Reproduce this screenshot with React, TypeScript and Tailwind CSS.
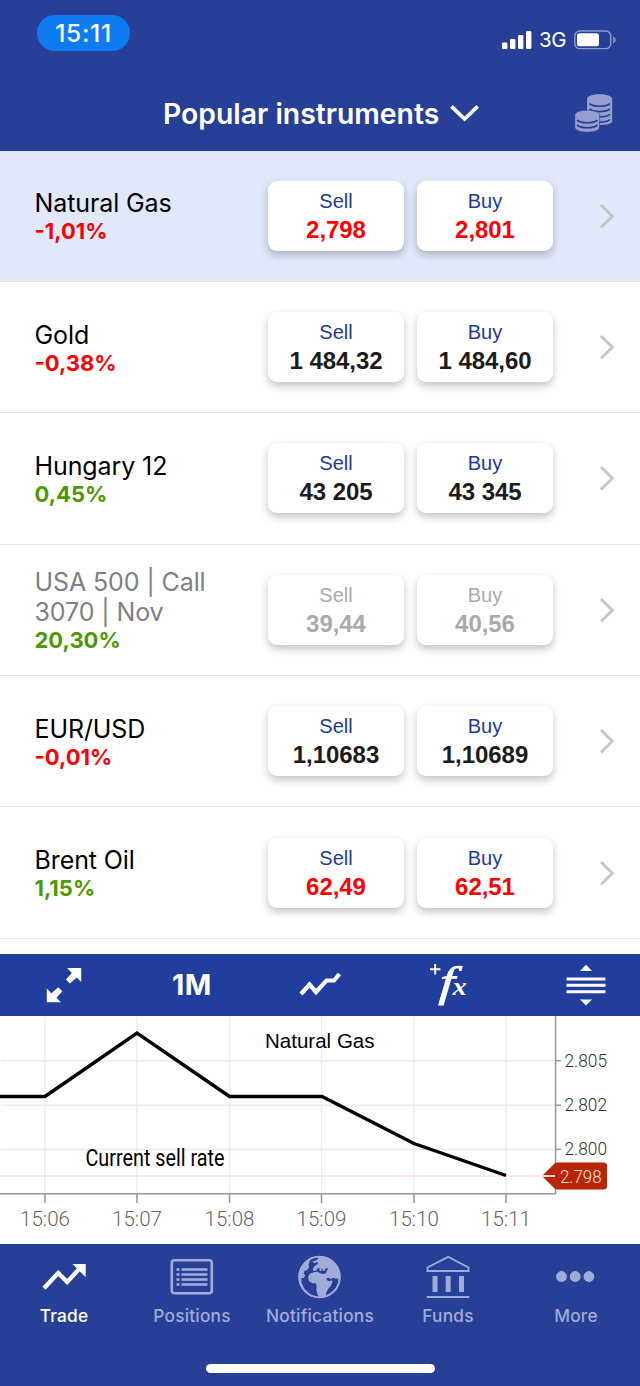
interface Instrument {
  name: string;
  change: string;
  sell: string;
  buy: string;
  priceColor: string;
  selected?: boolean;
  closed?: boolean;
}

const instruments: Instrument[] = [
  { name: 'Natural Gas', change: '-1,01%', sell: '2,798', buy: '2,801', priceColor: 'text-[#ff0000]', selected: true },
  { name: 'Gold', change: '-0,38%', sell: '1 484,32', buy: '1 484,60', priceColor: 'text-[#1c1c1c]' },
  { name: 'Hungary 12', change: '0,45%', sell: '43 205', buy: '43 345', priceColor: 'text-[#1c1c1c]' },
  { name: 'USA 500 | Call 3070 | Nov', change: '20,30%', sell: '39,44', buy: '40,56', priceColor: 'text-[#aaaaaa]', closed: true },
  { name: 'EUR/USD', change: '-0,01%', sell: '1,10683', buy: '1,10689', priceColor: 'text-[#1c1c1c]' },
  { name: 'Brent Oil', change: '1,15%', sell: '62,49', buy: '62,51', priceColor: 'text-[#ff0000]' },
];

const timeTicks = [
  { x: 45, label: '15:06' },
  { x: 137, label: '15:07' },
  { x: 229.5, label: '15:08' },
  { x: 321.5, label: '15:09' },
  { x: 414, label: '15:10' },
  { x: 506, label: '15:11' },
];

const rateTicks = [
  { y: 44.7, label: '2.805' },
  { y: 89.2, label: '2.802' },
  { y: 133.4, label: '2.800' },
];

function StatusBar() {
  return (
    <div className="flex h-[75px] justify-between pl-[37px] pr-[24px]">
      <div className="mt-[15px] flex h-9 w-[93px] items-center justify-center rounded-full bg-[#0e7bf1] text-[24.5px] font-medium tracking-[0.7px] text-white">
        15:11
      </div>
      <div className="mt-[28px] flex h-6 items-center text-white">
        <svg width="30" height="20" viewBox="0 0 30 20" fill="currentColor">
          <rect x="0" y="12.5" width="5.4" height="6.5" rx="1.3" />
          <rect x="8" y="9" width="5.4" height="10" rx="1.3" />
          <rect x="16" y="5" width="5.4" height="14" rx="1.3" />
          <rect x="24" y="1" width="5.4" height="18" rx="1.3" />
        </svg>
        <span className="ml-[7px] w-[29px] text-[20.5px] leading-6 tracking-[-0.5px]">3G</span>
        <svg className="ml-[6px]" width="42" height="20" viewBox="0 0 42 20">
          <rect x="0.8" y="1" width="36" height="17.6" rx="5" fill="none" stroke="#8f9bcc" strokeWidth="1.4" />
          <rect x="3" y="3.3" width="22" height="13" rx="2.5" fill="#fff" />
          <path d="M39.3 6.5c3 1.2 3 5.6 0 6.8z" fill="#8f9bcc" />
        </svg>
      </div>
    </div>
  );
}

function CoinsIcon() {
  return (
    <svg width="40" height="40" viewBox="0 0 40 40">
      <path d="M13 6v22c0 2.800 5.500 4 12.600 4s12.600-1.200 12.600-4V6c0-2.800-5.500-4.800-12.600-4.800S13 3.200 13 6z" fill="#959fcf" />
      <g fill="none" stroke="#273f96" strokeWidth="1.700" strokeLinecap="round">
        <path d="M16 11c4 3 15.500 3 19.500 0" />
        <path d="M16 16.300c4 3 15.500 3 19.500 0" />
        <path d="M16 21.600c4 3 15.500 3 19.500 0" />
        <path d="M16 26.900c4 3 15.500 3 19.500 0" />
      </g>
      <path d="M.8 22v12c0 3.200 5.500 5.200 12.400 5.200s12.400-2 12.400-5.200V22c0-3-5.500-4.700-12.400-4.700S.8 19 .8 22z" fill="#959fcf" stroke="#273f96" strokeWidth="0.600" />
      <g fill="none" stroke="#273f96" strokeWidth="1.700" strokeLinecap="round">
        <path d="M3.500 27.500c4 3 15.500 3 19.500 0" />
        <path d="M3.500 32.500c4 3 15.500 3 19.500 0" />
      </g>
    </svg>
  );
}

function Header() {
  return (
    <header className="h-[150.5px] shrink-0 bg-[#273f96]">
      <StatusBar />
      <div className="flex h-[75px] items-center pl-[163px] pr-[26px] text-white">
        <h1 className="w-[276px] whitespace-nowrap pt-[3px] text-[28.3px] font-semibold tracking-[0.02px]">Popular instruments</h1>
        <svg className="ml-[11px]" width="30" height="20" viewBox="0 0 30 20">
          <path d="M1.500 3.300l13.100 12.700L27.700 3.300" fill="none" stroke="#fff" strokeWidth="3.700" />
        </svg>
        <div className="ml-auto">
          <CoinsIcon />
        </div>
      </div>
    </header>
  );
}

function PriceButton({ label, price, item }: { label: string; price: string; item: Instrument }) {
  return (
    <button
      type="button"
      className="flex h-[70px] w-[136px] flex-col items-center rounded-[9px] bg-white pt-[8px] font-['Liberation_Sans',sans-serif] shadow-[0_4px_8px_rgba(0,0,0,0.24)]"
    >
      <span className={`text-[20px] leading-6 ${item.closed ? 'text-[#aaaaaa]' : 'text-[#1f3a97]'}`}>{label}</span>
      <span className={`mt-[3px] text-[24px] font-bold leading-7 tracking-[-0.05px] ${item.priceColor}`}>{price}</span>
    </button>
  );
}

function InstrumentRow({ item }: { item: Instrument }) {
  return (
    <div
      className={`flex h-[131.4px] shrink-0 items-center border-b border-[#e4e4e4] pl-[34.5px] pr-[24.5px] ${item.selected ? 'bg-[#e0e8f9]' : 'bg-white'}`}
    >
      <div className="w-[233.5px] pt-[2px]">
        <p className={`w-[190px] text-[25px] leading-[30px] tracking-[-0.1px] ${item.closed ? 'text-[#808080]' : 'text-black'}`}>
          {item.name}
        </p>
        <p className={`text-[22px] font-bold leading-[27px] ${item.change.startsWith('-') ? 'text-[#ff0000]' : 'text-[#4c9900]'}`}>
          {item.change}
        </p>
      </div>
      <div className="flex gap-[13px]">
        <PriceButton label="Sell" price={item.sell} item={item} />
        <PriceButton label="Buy" price={item.buy} item={item} />
      </div>
      <svg className="ml-auto" width="18" height="26" viewBox="0 0 18 26">
        <path d="M3 2l11.300 11.300L3 24.500" fill="none" stroke="#c7c7c7" strokeWidth="3" />
      </svg>
    </div>
  );
}

function ChartToolbar() {
  return (
    <div className="grid h-[62px] shrink-0 grid-cols-5 place-items-center bg-[#213d9d] text-white">
      <svg width="36" height="36" viewBox="0 0 36 36">
        <path d="M21 1h14.200v14l-4.500-4.400-6.800 6-4-4 6-6.600z" fill="#fff" />
        <path d="M.8 21.500v13.800h14.200l-4.500-4.600 5.800-6.500-4-4-7 6z" fill="#fff" />
      </svg>
      <span className="text-[28.5px] font-bold tracking-[0.7px]">1M</span>
      <svg width="44" height="30" viewBox="0 0 44 30">
        <path d="M3 24l8.500-9.500 6.500 7.500 10.500-11.500h7.500l5.500-6.500" fill="none" stroke="#fff" strokeWidth="4.200" />
      </svg>
      {/* add indicator */}
      <svg className="overflow-visible" width="44" height="48" viewBox="0 0 44 48" fill="#fff">
        <path d="M4 8.300h10.500M9.200 3v10.500" stroke="#fff" strokeWidth="1.900" />
        <g fontFamily="'Liberation Serif', serif" fontStyle="italic">
          <text transform="translate(12.800 35) skewX(-4) scale(1.280 1)" fontSize="42.500" stroke="#fff" strokeWidth="0.800">f</text>
          <text transform="translate(26.500 34) scale(1.100 1)" fontSize="26" fontWeight="700">x</text>
        </g>
      </svg>
      <svg className="relative left-[10px]" width="40" height="42" viewBox="0 0 40 42" fill="#fff">
        <path d="M14 7L20 .8 26 7zM14 35.500l6 6 6-6z" />
        <path d="M.5 13.500h39v3H.5zM.5 19.800h39v3H.5zM.5 26.200h39v3H.5z" />
      </svg>
    </div>
  );
}

function RateChart() {
  return (
    <svg className="block shrink-0 bg-white" width="640" height="228" viewBox="0 0 640 228" fontFamily="Roboto, sans-serif">
      {/* grid */}
      {timeTicks.map((t) => (
        <path key={t.label} d={`M${t.x} 1v176`} stroke="#ececec" strokeWidth="1.500" />
      ))}
      {rateTicks.map((r) => (
        <path key={r.label} d={`M1 ${r.y}h554`} stroke="#ececec" strokeWidth="1.500" />
      ))}
      <path d="M0 160h545" stroke="#f6dfea" strokeWidth="1.700" />

      {/* axes */}
      <path d="M0 177.700h556M555.600 0v178" stroke="#969696" strokeWidth="1.500" fill="none" />
      {timeTicks.map((t) => (
        <g key={t.label}>
          <path d={`M${t.x} 178v9`} stroke="#969696" strokeWidth="1.500" />
          <text x={t.x} y="209.500" textAnchor="middle" fontSize="20.500" fontWeight="300" fill="#666">{t.label}</text>
        </g>
      ))}
      {rateTicks.map((r) => (
        <g key={r.label}>
          <path d={`M556 ${r.y}h5`} stroke="#969696" strokeWidth="1.500" />
          <text x="564.500" y={r.y + 5.9} fontSize="18" fontWeight="300" fill="#333" textLength="42.500" lengthAdjust="spacingAndGlyphs">{r.label}</text>
        </g>
      ))}

      <path d="M0 80.500h45l92-63.500 92.500 63.500h92.500l92 47 92 32" fill="none" stroke="#000" strokeWidth="3.400" />

      {/* current rate flag */}
      <path d="M542 160l12-12c1.300-1.200 2-1.500 4-1.500h45.500a3.500 3.500 0 0 1 3.500 3.500v20a3.500 3.500 0 0 1-3.500 3.500H558c-2 0-2.700-.3-4-1.500z" fill="#b82507" />
      <path d="M542 160h13" stroke="#ffdcd6" strokeWidth="2" />
      <text x="560" y="166.500" fontSize="18" fontWeight="300" fill="#ffe5df" textLength="41.500" lengthAdjust="spacingAndGlyphs">2.798</text>

      <text x="265" y="32" fontFamily="'Liberation Sans', sans-serif" fontSize="20.500" textLength="109.500">Natural Gas</text>
      <text x="85.500" y="150" fontSize="23" textLength="139" lengthAdjust="spacingAndGlyphs">Current sell rate</text>
    </svg>
  );
}

function TradeIcon() {
  return (
    <svg width="44" height="44" viewBox="0 0 44 44">
      <path d="M2 33.300L16.200 18l9 9L38 13" fill="none" stroke="#fff" strokeWidth="4.300" />
      <path d="M30.500 9h13.200v13.200z" fill="#fff" />
    </svg>
  );
}

function PositionsIcon() {
  return (
    <svg width="44" height="44" viewBox="0 0 44 44" fill="#a1abd8">
      <rect x="1.800" y="5.300" width="40" height="33" rx="2.500" fill="none" stroke="#a1abd8" strokeWidth="2.600" />
      {[13.2, 18.2, 23.2, 28.2].map((y) => (
        <g key={y}>
          <rect x="6.500" y={y} width="3" height="2.600" />
          <rect x="11.500" y={y} width="26" height="2.600" />
        </g>
      ))}
    </svg>
  );
}

function GlobeIcon() {
  return (
    <svg width="44" height="44" viewBox="24 20 132 132">
      <circle cx="88.500" cy="86" r="63" fill="#a1abd8" />
      {/* atlantic */}
      <path
        d="M62 32l16-5 8 2-6 6-14 5 8 4 8-3 2 5-10 7-6 10 3 5 9-2 3 4-12 2-12 4-5 11 3 12 10 6 10 0 3 9-1 12 4 13 5 9-12-3-18-9-15-15-8-18-1-13 8-2 4-7-5-5 1-7 10-4 5-9-1-8z"
        fill="#273f96"
      />
      {/* mediterranean and black sea */}
      <path d="M80 63l5-4 4 1-1 5 5 4 3-2-3-7 4 2 4 7 4-3 1-5 6-2 2 4-4 4-1 6-6 4-8-1-7-3-7-4z" fill="#273f96" />
      {/* indian ocean */}
      <path d="M109 90l7-2 5 4 8-3 14 2 3 5-4 16-9 12-15 13-9 4-1-7 6-11 8-10 6-14-4-3-6 3-7-3z" fill="#273f96" />
      <circle cx="88.500" cy="86" r="61" fill="none" stroke="#a1abd8" strokeWidth="5.500" />
    </svg>
  );
}

function FundsIcon() {
  return (
    <svg width="44" height="44" viewBox="0 0 44 44" fill="#a1abd8">
      <path d="M1.500 16v-3.500L22.200 1.800l20.300 10.700V16z" fill="none" stroke="#a1abd8" strokeWidth="1.900" />
      <path d="M6.500 21h5v16h-5zM19.700 21h5v16h-5zM33 21h5v16h-5zM.8 41h42.500v2H.8z" />
    </svg>
  );
}

function MoreIcon() {
  return (
    <svg width="44" height="44" viewBox="0 0 44 44" fill="#a1abd8">
      <circle cx="7.500" cy="21.500" r="5.400" />
      <circle cx="21.200" cy="21.500" r="5.400" />
      <circle cx="34.900" cy="21.500" r="5.400" />
    </svg>
  );
}

const tabs = [
  { label: 'Trade', Icon: TradeIcon, active: true },
  { label: 'Positions', Icon: PositionsIcon },
  { label: 'Notifications', Icon: GlobeIcon },
  { label: 'Funds', Icon: FundsIcon },
  { label: 'More', Icon: MoreIcon },
];

function TabBar() {
  return (
    <nav className="flex h-[142px] shrink-0 flex-col items-center bg-[#273f96]">
      <div className="grid w-full grid-cols-5 pt-[10.5px]">
        {tabs.map(({ label, Icon, active }) => (
          <div key={label} className="flex flex-col items-center">
            <Icon />
            <span className={`mt-[5px] text-[17.3px] font-medium leading-6 tracking-[0.22px] ${active ? 'text-white' : 'text-[#a1abd8]'}`}>
              {label}
            </span>
          </div>
        ))}
      </div>
      {/* home indicator */}
      <div className="mt-[36px] h-[9px] w-[229px] rounded-full bg-white" />
    </nav>
  );
}

export default function App() {
  return (
    <div className="flex h-[1386px] w-[640px] flex-col overflow-hidden bg-white font-[Inter,sans-serif]">
      <Header />
      <main className="h-[803.5px] shrink-0 overflow-hidden">
        {instruments.map((item) => (
          <InstrumentRow key={item.name} item={item} />
        ))}
      </main>
      <ChartToolbar />
      <RateChart />
      <TabBar />
    </div>
  );
}
